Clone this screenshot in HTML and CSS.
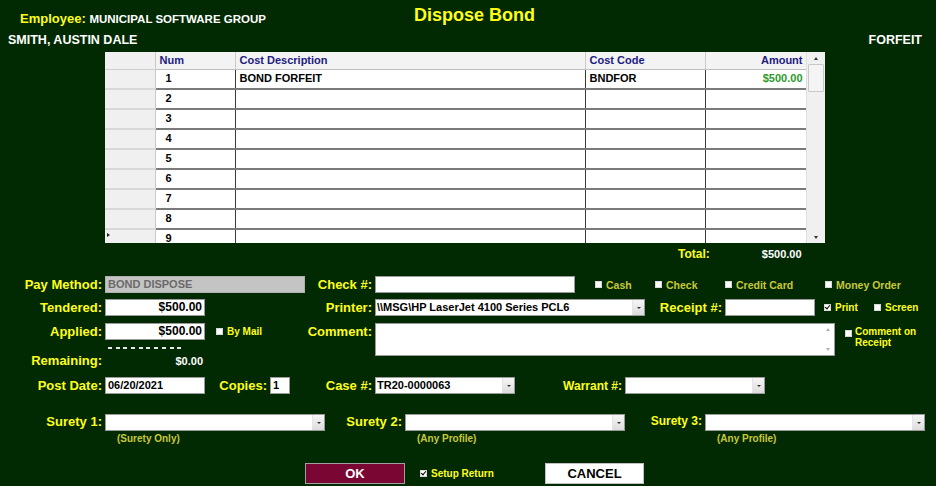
FILE: index.html
```html
<!DOCTYPE html>
<html>
<head>
<meta charset="utf-8">
<link rel="stylesheet" href="styles.css">
</head>
<body>
<div class="win">
  <div class="hdr1">
    <div class="emp"><span class="y">Employee:</span> <span class="empname">MUNICIPAL SOFTWARE GROUP</span></div>
    <div class="title">Dispose Bond</div>
  </div>
  <div class="hdr2"><span>SMITH, AUSTIN DALE</span><span>FORFEIT</span></div>

  <div class="grid-wrap">
    <div class="grid-clip">
      <table class="grid">
        <colgroup><col class="c-sel"><col class="c-num"><col class="c-desc"><col class="c-code"><col class="c-amt"></colgroup>
        <thead><tr><th class="sel"></th><th>Num</th><th>Cost Description</th><th>Cost Code</th><th class="r">Amount</th></tr></thead>
        <tbody>
          <tr><td class="sel"></td><td class="num">1</td><td>BOND FORFEIT</td><td>BNDFOR</td><td class="r amt">$500.00</td></tr>
          <tr><td class="sel"></td><td class="num">2</td><td></td><td></td><td></td></tr>
          <tr><td class="sel"></td><td class="num">3</td><td></td><td></td><td></td></tr>
          <tr><td class="sel"></td><td class="num">4</td><td></td><td></td><td></td></tr>
          <tr><td class="sel"></td><td class="num">5</td><td></td><td></td><td></td></tr>
          <tr><td class="sel"></td><td class="num">6</td><td></td><td></td><td></td></tr>
          <tr><td class="sel"></td><td class="num">7</td><td></td><td></td><td></td></tr>
          <tr><td class="sel"></td><td class="num">8</td><td></td><td></td><td></td></tr>
          <tr><td class="sel cur"><span class="tri"></span></td><td class="num">9</td><td></td><td></td><td></td></tr>
        </tbody>
      </table>
    </div>
    <div class="vscroll">
      <div class="sb-btn"><span class="up"></span></div>
      <div class="sb-thumb"></div>
      <div class="sb-track"></div>
      <div class="sb-btn"><span class="down"></span></div>
    </div>
  </div>

  <div class="total"><span class="y">Total:</span><span class="tval">$500.00</span></div>

  <div class="row rowA">
    <label class="lbl w105">Pay Method:</label>
    <div class="inp gray w200">BOND DISPOSE</div>
    <label class="lbl w70">Check #:</label>
    <div class="inp w200"></div>
    <div class="chk dim w60 ml20"><span class="box"></span>Cash</div>
    <div class="chk dim w70"><span class="box"></span>Check</div>
    <div class="chk dim w100"><span class="box"></span>Credit Card</div>
    <div class="chk dim"><span class="box"></span>Money Order</div>
  </div>

  <div class="row rowB">
    <label class="lbl w105">Tendered:</label>
    <div class="inp r w100">$500.00</div>
    <div class="w100"></div>
    <label class="lbl w70">Printer:</label>
    <div class="sel-inp w270"><span class="sv">\\MSG\HP LaserJet 4100 Series PCL6</span><span class="dd"></span></div>
    <label class="lbl w80 big">Receipt #:</label>
    <div class="inp w90"></div>
    <div class="chk sm w50 ml9"><span class="box checked"></span>Print</div>
    <div class="chk sm"><span class="box"></span>Screen</div>
  </div>

  <div class="row rowC">
    <div class="leftstack">
      <div class="row">
        <label class="lbl w105">Applied:</label>
        <div class="inp r w100">$500.00</div>
        <div class="chk sm ml11"><span class="box"></span>By Mail</div>
      </div>
      <div class="dashes"></div>
      <div class="row rem">
        <label class="lbl w105">Remaining:</label>
        <div class="remval">$0.00</div>
      </div>
    </div>
    <label class="lbl w70 top">Comment:</label>
    <div class="txtarea"><div class="ta-sb"><span class="up gray"></span><span class="down gray"></span></div></div>
    <div class="chk sm cor"><span class="box"></span><span>Comment on<br>Receipt</span></div>
  </div>

  <div class="row rowE">
    <label class="lbl w105">Post Date:</label>
    <div class="inp w100">06/20/2021</div>
    <label class="lbl w65">Copies:</label>
    <div class="inp w20">1</div>
    <label class="lbl w85">Case #:</label>
    <div class="sel-inp w140"><span class="sv">TR20-0000063</span><span class="dd"></span></div>
    <label class="lbl w110 md">Warrant #:</label>
    <div class="sel-inp w140"><span class="sv"></span><span class="dd"></span></div>
  </div>

  <div class="row rowF">
    <label class="lbl w105">Surety 1:</label>
    <div class="scol"><div class="sel-inp w220"><span class="sv"></span><span class="dd"></span></div><div class="sub">(Surety Only)</div></div>
    <label class="lbl w80">Surety 2:</label>
    <div class="scol"><div class="sel-inp w220"><span class="sv"></span><span class="dd"></span></div><div class="sub">(Any Profile)</div></div>
    <label class="lbl w80 md">Surety 3:</label>
    <div class="scol"><div class="sel-inp w220"><span class="sv"></span><span class="dd"></span></div><div class="sub">(Any Profile)</div></div>
  </div>

  <div class="row rowG">
    <div class="btn ok">OK</div>
    <div class="chk sm setup"><span class="box checked"></span>Setup Return</div>
    <div class="btn cancel">CANCEL</div>
  </div>
</div>
</body>
</html>
```

FILE: styles.css
```css
html, body { margin: 0; padding: 0; }
body {
  background: #022a02;
  font-family: "Liberation Sans", Arial, sans-serif;
  font-weight: bold;
  color: #ffffff;
  width: 936px;
  height: 486px;
  overflow: hidden;
}
.win { width: 936px; height: 486px; }
.y { color: #ffff1a; }

.hdr1 { display: flex; align-items: flex-start; height: 29px; }
.emp { width: 414px; padding-left: 20px; box-sizing: border-box; font-size: 13px; line-height: 16px; margin-top: 11px; }
.empname { color: #fff; font-size: 11.5px; }
.title { color: #ffff1a; font-size: 18px; line-height: 22px; margin-top: 4px; }
.hdr2 { display: flex; justify-content: space-between; padding: 0 14px 0 8px; font-size: 12.5px; line-height: 23px; height: 23px; }

.grid-wrap { display: flex; margin-left: 105px; width: 720px; height: 191px; background: #fff; }
.grid-clip { width: 701px; height: 191px; overflow: hidden; }
.grid { border-collapse: collapse; table-layout: fixed; width: 701px; font-size: 11px; }
.c-sel { width: 50px; } .c-num { width: 80px; } .c-desc { width: 350px; } .c-code { width: 120px; } .c-amt { width: 101px; }
.grid th { height: 17px; padding: 0 4px; text-align: left; color: #1c2080; background: #f3f3f3; border-right: 1px solid #c9c9c9; border-bottom: 1px solid #bdbdbd; font-size: 11px; line-height: 16px; box-sizing: border-box; }
.grid th.r, .grid td.r { text-align: right; padding-right: 3px; }
.grid td { height: 20px; padding: 0 4px; color: #000; border-right: 1px solid #3a3a3a; border-bottom: 2px solid #7a7a7a; box-sizing: border-box; line-height: 16px; vertical-align: top; }
.grid td.num { padding-left: 10px; }
.grid td.sel, .grid th.sel { background: #f0f0f0; border-right: 1px solid #c8c8c8; border-bottom: 2px solid #d8d8d8; position: relative; }
.grid th.sel { border-bottom: 1px solid #d0d0d0; }
.grid td.amt { color: #2a9a2a; }
.tri { position: absolute; left: 2px; top: 3px; width: 0; height: 0; border-left: 3px solid #222; border-top: 2px solid transparent; border-bottom: 2px solid transparent; }

.vscroll { width: 19px; background: #f0f0f0; display: flex; flex-direction: column; border-left: 1px solid #e0e0e0; box-sizing: border-box; }
.sb-btn { height: 12px; display: flex; align-items: center; justify-content: center; }
.sb-thumb { height: 26px; margin: 0 1px; background: #f4f4f4; border: 1px solid #c8c8c8; border-radius: 1px; }
.sb-track { flex: 1; }
.up { width: 0; height: 0; border-left: 2px solid transparent; border-right: 2px solid transparent; border-bottom: 3px solid #333; }
.down { width: 0; height: 0; border-left: 2px solid transparent; border-right: 2px solid transparent; border-top: 3px solid #333; }
.up.gray { border-bottom-color: #b0b0b0; }
.down.gray { border-top-color: #b0b0b0; }

.total { display: flex; height: 21px; align-items: center; font-size: 12px; padding-left: 678px; }
.tval { margin-left: 52px; color: #fff; font-size: 11px; }

.row { display: flex; align-items: center; }
.rowA { margin-top: 12px; height: 17px; }
.rowB { margin-top: 6px; height: 17px; }
.rowC { margin-top: 7px; align-items: flex-start; }
.rowE { margin-top: 8px; height: 17px; }
.rowF { margin-top: 20px; align-items: flex-start; }
.rowG { margin-top: 17px; height: 21px; padding-left: 305px; }

.lbl { color: #ffff1a; font-size: 13px; text-align: right; padding-right: 3px; box-sizing: border-box; white-space: nowrap; }
.lbl.md { font-size: 12px; }
.lbl.top { line-height: 17px; }
.w20 { width: 20px; } .w50 { width: 50px; } .w60 { width: 60px; } .w65 { width: 65px; } .w70 { width: 70px; } .w80 { width: 80px; } .w85 { width: 85px; } .w90 { width: 90px; }
.w100 { width: 100px; } .w105 { width: 105px; } .w110 { width: 110px; } .w140 { width: 140px; } .w200 { width: 200px; } .w220 { width: 220px; } .w270 { width: 270px; }
.ml9 { margin-left: 9px; } .ml11 { margin-left: 11px; } .ml20 { margin-left: 20px; }

.inp { height: 17px; background: #fff; color: #000; border: 1px solid #9a9a9a; box-sizing: border-box; font-size: 11px; line-height: 15px; padding: 0 2px; white-space: nowrap; overflow: hidden; }
.inp.r { text-align: right; font-size: 12px; }
.inp.gray { background: #c4c4c4; color: #6a6a6a; border-color: #b0b0b0; }
.sel-inp { height: 17px; background: #fff; color: #000; border: 1px solid #9a9a9a; box-sizing: border-box; display: flex; font-size: 11px; line-height: 15px; }
.sv { flex: 1; padding-left: 1px; white-space: nowrap; overflow: hidden; }
.dd { width: 11px; background: linear-gradient(#f6f6f6, #dcdcdc); border-left: 1px solid #e4e4e4; position: relative; }
.dd::after { content: ""; position: absolute; left: 4px; top: 7px; width: 0; height: 0; border-left: 2px solid transparent; border-right: 2px solid transparent; border-top: 2px solid #333; }

.chk { display: flex; align-items: center; font-size: 10.5px; color: #ffff1a; white-space: nowrap; }
.chk.dim { color: #c8c83a; }
.box { width: 7px; height: 7px; box-sizing: border-box; background: #fff; border: 1px solid #d8d8d8; margin-right: 4px; flex: none; position: relative; }
.box.checked::after { content: ""; position: absolute; left: 1px; top: -1px; width: 2px; height: 4px; border-right: 1.5px solid #000; border-bottom: 1.5px solid #000; transform: rotate(40deg); }
.chk.sm { font-size: 10px; }

.leftstack { width: 305px; display: flex; flex-direction: column; }
.leftstack .row { height: 17px; }
.dashes { margin: 7px 0 0 108px; width: 74px; height: 2px; background: repeating-linear-gradient(90deg, #e6e6e6 0 4px, transparent 4px 7.7px); }
.rem { margin-top: 3px; }
.remval { width: 98px; text-align: right; font-size: 11px; color: #fff; }
.txtarea { width: 460px; height: 33px; background: #fff; border: 1px solid #9a9a9a; box-sizing: border-box; display: flex; justify-content: flex-end; }
.ta-sb { width: 12px; display: flex; flex-direction: column; justify-content: space-between; align-items: center; padding: 4px 0; box-sizing: border-box; }
.cor { margin-left: 10px; margin-top: 3px; align-items: flex-start; line-height: 11px; }
.cor .box { margin-top: 4px; margin-right: 3px; }

.scol { display: flex; flex-direction: column; }
.sub { color: #c8c83a; font-size: 10px; padding-left: 12px; padding-top: 1px; line-height: 14px; }

.btn { height: 21px; box-sizing: border-box; display: flex; align-items: center; justify-content: center; font-size: 13px; }
.ok { width: 100px; background: #7a0634; color: #fff; border: 1px solid #a0a0a0; }
.setup { margin-left: 15px; width: 125px; }
.cancel { width: 99px; background: #fff; color: #000; border: 1px solid #c0c0c0; }
```
